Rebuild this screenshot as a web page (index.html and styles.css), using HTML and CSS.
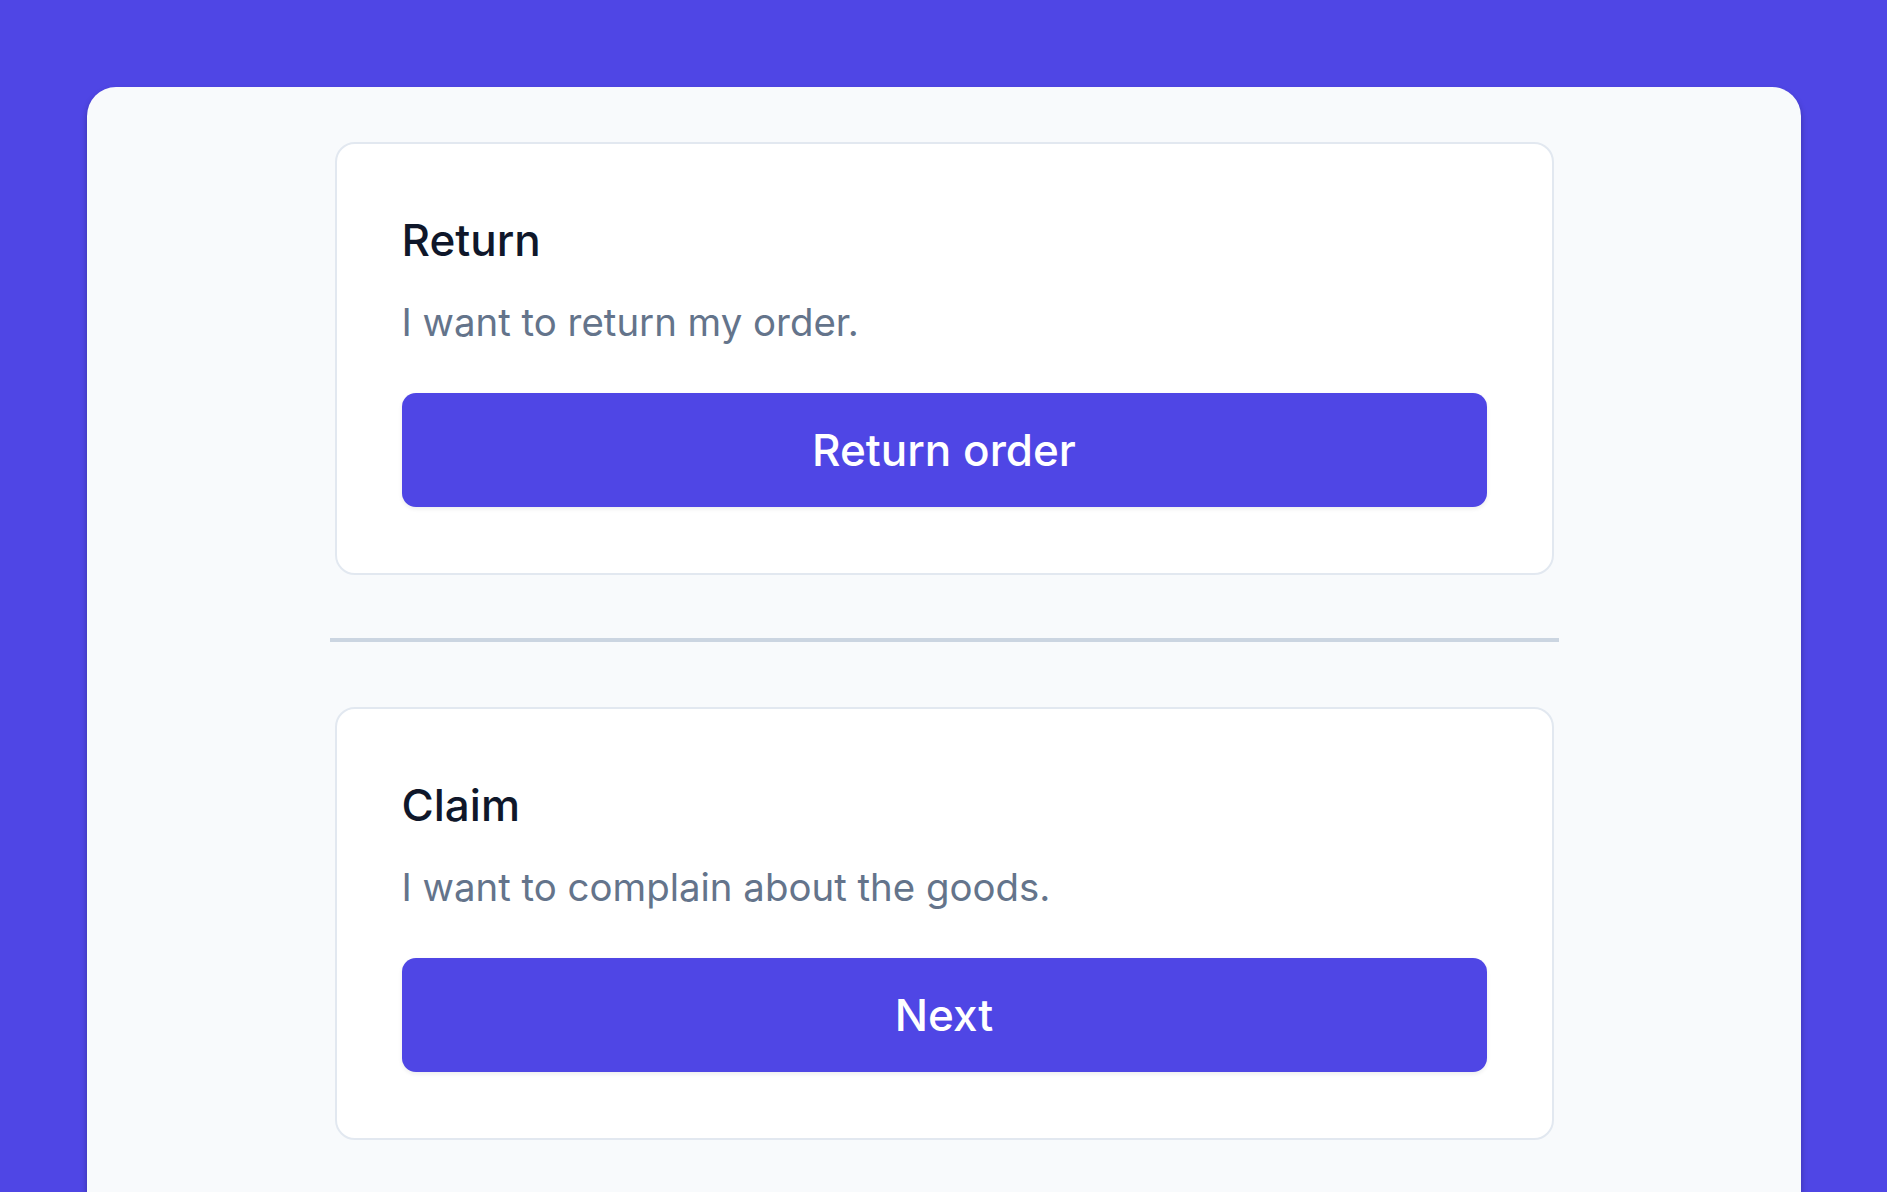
FILE: index.html
```html
<!DOCTYPE html>
<html lang="en">
<head>
    <meta charset="UTF-8">
    <meta name="viewport" content="width=device-width, initial-scale=1.0">
    <title>Return or Claim</title>
    <link rel="stylesheet" href="styles.css">
</head>
<body>
    <div class="backdrop">
        <main class="panel">
            <div class="options">
                <section class="option-card">
                    <h2>Return</h2>
                    <p>I want to return my order.</p>
                    <button type="button">Return order</button>
                </section>
                <hr class="divider">
                <section class="option-card">
                    <h2>Claim</h2>
                    <p>I want to complain about the goods.</p>
                    <button type="button">Next</button>
                </section>
            </div>
        </main>
    </div>
</body>
</html>
```

FILE: styles.css
```css
html, body {
    margin: 0;
    padding: 0;
    background-color: #fff;
}
body {
    font-family: Inter, "Noto Sans", sans-serif;
}
.backdrop {
    background-color: #4f46e5;
    height: 1192px;
    padding: 87px 86px 0 87px;
    box-sizing: border-box;
    display: flex;
}
.panel {
    flex: 1;
    background-color: #f8fafc;
    border-radius: 29px 29px 0 0;
    box-shadow: 0 4px 6px rgba(0, 0, 0, 0.28);
    display: flex;
    justify-content: center;
    padding-top: 55px;
}
.options {
    width: 1229px;
    display: flex;
    flex-direction: column;
}
.option-card {
    margin: 0 5px;
    background-color: #fff;
    border: 2px solid #e2e8f0;
    border-radius: 20px;
    padding: 70px 65px 66px;
    display: flex;
    flex-direction: column;
}
.option-card h2 {
    margin: 0;
    font-size: 44px;
    font-weight: 500;
    line-height: 53px;
    color: #0f172a;
}
.option-card p {
    margin: 32px 0 0;
    font-size: 38.4px;
    line-height: 46px;
    color: #64748b;
}
.option-card button {
    margin-top: 48px;
    height: 114px;
    border: none;
    border-radius: 14px;
    background-color: #4f46e5;
    color: #fff;
    font-family: inherit;
    font-size: 44px;
    font-weight: 500;
    box-shadow: 0 2px 4px rgba(15, 23, 42, 0.08);
    cursor: pointer;
}
.divider {
    margin: 63px 0 65px;
    border: none;
    height: 4px;
    background-color: #cbd5e1;
}
```
